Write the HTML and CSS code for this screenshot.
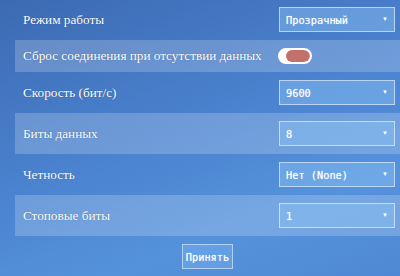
FILE: index.html
```html
<!DOCTYPE html>
<html lang="ru">
<head>
  <meta charset="UTF-8">
  <meta name="viewport" content="width=device-width, initial-scale=1.0">
  <title>Настройки порта</title>
  <link rel="stylesheet" href="styles.css">
</head>
<body>
  <form id="port-form" class="settings">
    <div class="row">
      <label for="mode">Режим работы</label>
      <div class="select-wrap">
        <select id="mode" name="mode">
          <option>Прозрачный</option>
        </select>
      </div>
    </div>
    <div class="row row-alt">
      <span class="label">Сброс соединения при отсутствии данных</span>
      <div class="control">
        <span class="toggle"><span class="toggle-fill"></span></span>
      </div>
    </div>
    <div class="row">
      <label for="baud">Скорость (бит/с)</label>
      <div class="select-wrap">
        <select id="baud" name="baud">
          <option>9600</option>
        </select>
      </div>
    </div>
    <div class="row row-alt">
      <label for="databits">Биты данных</label>
      <div class="select-wrap">
        <select id="databits" name="databits">
          <option>8</option>
        </select>
      </div>
    </div>
    <div class="row">
      <label for="parity">Четность</label>
      <div class="select-wrap">
        <select id="parity" name="parity">
          <option>Нет (None)</option>
        </select>
      </div>
    </div>
    <div class="row row-alt">
      <label for="stopbits">Стоповые биты</label>
      <div class="select-wrap">
        <select id="stopbits" name="stopbits">
          <option>1</option>
        </select>
      </div>
    </div>
    <div class="actions">
      <button type="submit">Принять</button>
    </div>
  </form>
</body>
</html>
```

FILE: styles.css
```css
/* Фон страницы */
html {
  height: 100%;
}

body {
  margin: 0;
  min-height: 100%;
  background: linear-gradient(160deg, #3c6ab2 0%, #4a82cf 45%, #5592dc 75%, #4f88d4 100%);
  font-family: "Liberation Serif", "Times New Roman", serif;
  color: #fff;
  overflow: hidden;
}

/* Блок настроек */
.settings {
  margin: -1px 0 0 15px;
}

.row {
  display: flex;
  align-items: center;
  justify-content: space-between;
  padding: 8px 5px 8px 8px;
}

.row-alt {
  background-color: rgba(255, 255, 255, 0.2);
}

.row label,
.row .label {
  font-family: "Liberation Serif", "Times New Roman", serif;
  font-size: 13.2px;
  text-shadow: 0 0 1px rgba(0, 0, 0, 0.35);
}

/* Выпадающие списки */
.select-wrap,
.control {
  position: relative;
  width: 116px;
}

.select-wrap::after {
  content: "\25BC";
  position: absolute;
  right: 7px;
  top: 9px;
  font-size: 6px;
  line-height: 1;
  color: #fff;
  pointer-events: none;
}

select {
  -webkit-appearance: none;
  appearance: none;
  display: block;
  width: 100%;
  height: 25px;
  margin: 0;
  padding: 0 6px;
  border: 1px solid rgba(255, 255, 255, 0.55);
  border-radius: 0;
  background-color: rgba(140, 195, 245, 0.45);
  color: #fff;
  font-family: "DejaVu Sans Mono", monospace;
  font-size: 10.3px;
  font-weight: normal;
  text-shadow: 0 0 1px rgba(255, 255, 255, 0.6);
  outline: none;
}

/* Переключатель */
.toggle {
  display: block;
  width: 30px;
  height: 12px;
  border: 2px solid #fff;
  border-radius: 8px;
  background-color: #fff;
  margin-left: -1px;
  position: relative;
  overflow: hidden;
}

.toggle-fill {
  position: absolute;
  left: 6px;
  top: 0;
  right: 0;
  bottom: 0;
  border-radius: 6px;
  background-color: #c2706a;
}

/* Кнопка */
.actions {
  display: flex;
  justify-content: center;
  padding-top: 8px;
}

button[type="submit"] {
  width: 51px;
  height: 25px;
  padding: 0;
  border: 1px solid rgba(255, 255, 255, 0.5);
  border-radius: 0;
  background-color: rgba(140, 195, 245, 0.3);
  color: #fff;
  font-family: "DejaVu Sans Mono", monospace;
  font-size: 10.3px;
  text-shadow: 0 0 1px rgba(255, 255, 255, 0.6);
  cursor: pointer;
}
```
